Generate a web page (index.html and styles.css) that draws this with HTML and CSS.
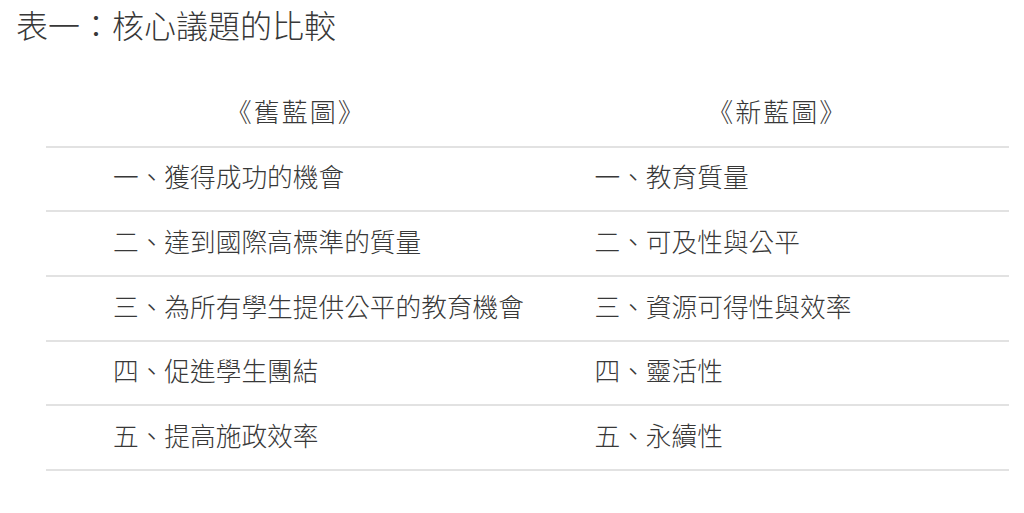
FILE: index.html
```html
<!DOCTYPE html>
<html lang="zh-Hant">
<head>
<meta charset="utf-8">
<link rel="stylesheet" href="styles.css">
</head>
<body>
<h1 class="title">表一：核心議題的比較</h1>
<div class="table">
  <div class="row head">
    <div class="cell">《舊藍圖》</div>
    <div class="cell">《新藍圖》</div>
  </div>
  <div class="row">
    <div class="cell">一、獲得成功的機會</div>
    <div class="cell">一、教育質量</div>
  </div>
  <div class="row">
    <div class="cell">二、達到國際高標準的質量</div>
    <div class="cell">二、可及性與公平</div>
  </div>
  <div class="row">
    <div class="cell">三、為所有學生提供公平的教育機會</div>
    <div class="cell">三、資源可得性與效率</div>
  </div>
  <div class="row">
    <div class="cell">四、促進學生團結</div>
    <div class="cell">四、靈活性</div>
  </div>
  <div class="row">
    <div class="cell">五、提高施政效率</div>
    <div class="cell">五、永續性</div>
  </div>
</div>
</body>
</html>
```

FILE: styles.css
```css
html, body {
  margin: 0;
  padding: 0;
  background: #ffffff;
}
body {
  padding: 0 16px;
  font-family: "Noto Sans CJK TC", "Noto Sans CJK SC", sans-serif;
  color: #383838;
}
.title {
  margin: 0;
  font-size: 32px;
  font-weight: 300;
  line-height: 48px;
  height: 48px;
}
.table {
  margin: 35px 0 0 30px;
  width: 963px;
}
.row {
  display: grid;
  grid-template-columns: 1fr 1fr;
  height: 62.7px;
  border-bottom: 2px solid #e2e2e2;
  align-items: center;
  font-size: 25.7px;
  font-weight: 300;
  line-height: 1;
}
.row .cell {
  padding-left: 67px;
  padding-bottom: 6px;
  white-space: nowrap;
}
.row.head .cell {
  padding-left: 18px;
  text-align: center;
  font-size: 26px;
  letter-spacing: 2px;
}
```
